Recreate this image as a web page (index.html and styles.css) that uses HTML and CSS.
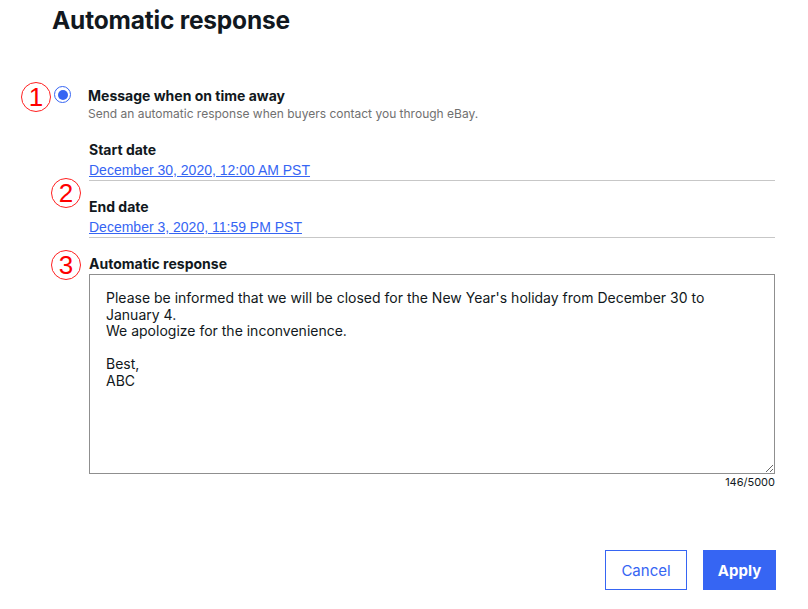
FILE: index.html
```html
<!DOCTYPE html>
<html lang="en">
<head>
    <meta charset="UTF-8">
    <title>Automatic response</title>
    <link rel="stylesheet" href="styles.css">
</head>
<body>
    <div class="page">
        <h1 class="title">Automatic response</h1>

        <div class="row row-away">
            <span class="mark">1</span>
            <span class="radio"><span class="radio-dot"></span></span>
            <div class="away">
                <div class="label">Message when on time away</div>
                <div class="hint">Send an automatic response when buyers contact you through eBay.</div>
            </div>
        </div>

        <div class="row row-dates">
            <span class="mark">2</span>
            <div class="dates">
                <div class="field">
                    <div class="label">Start date</div>
                    <a href="#" class="date-link">December 30, 2020, 12:00 AM PST</a>
                </div>
                <div class="field">
                    <div class="label">End date</div>
                    <a href="#" class="date-link">December 3, 2020, 11:59 PM PST</a>
                </div>
            </div>
        </div>

        <div class="row row-response">
            <span class="mark">3</span>
            <div class="response">
                <div class="label">Automatic response</div>
                <textarea class="message" maxlength="5000">Please be informed that we will be closed for the New Year's holiday from December 30 to January 4.
We apologize for the inconvenience.

Best,
ABC</textarea>
                <div class="counter">146/5000</div>
            </div>
        </div>

        <div class="actions">
            <button class="btn btn-cancel">Cancel</button>
            <button class="btn btn-apply">Apply</button>
        </div>
    </div>
</body>
</html>
```

FILE: styles.css
```css
body {
    margin: 0;
    font-family: Inter, "Noto Sans", sans-serif;
    color: #111820;
    background-color: #fff;
}

.page {
    width: 808px;
    height: 609px;
}

.title {
    margin: 0;
    padding: 5px 0 0 52px;
    font-size: 24.5px;
    font-weight: 700;
    line-height: 30px;
    letter-spacing: -0.2px;
}

.row {
    display: flex;
    align-items: flex-start;
}

.mark {
    width: 28px;
    height: 28px;
    border: 1px solid #ff2020;
    border-radius: 50%;
    color: #ff0000;
    font-family: "Liberation Sans", sans-serif;
    font-size: 26px;
    line-height: 29px;
    text-align: center;
    flex: none;
}

.row-away {
    margin-top: 47px;
    padding-left: 21px;
}

.radio {
    width: 15px;
    height: 15px;
    margin: 4px 0 0 3px;
    border: 1.5px solid #3665f3;
    border-radius: 50%;
    display: flex;
    align-items: center;
    justify-content: center;
    flex: none;
}

.radio-dot {
    width: 10px;
    height: 10px;
    border-radius: 50%;
    background-color: #3665f3;
}

.away {
    margin: 5px 0 0 17px;
}

.label {
    font-size: 14px;
    font-weight: 700;
    line-height: 18px;
}

.hint {
    margin-top: 1px;
    font-size: 12px;
    color: #707070;
    line-height: 16px;
}

.row-dates {
    margin-top: 19px;
    padding-left: 51px;
}

.row-dates .mark {
    margin-top: 37px;
}

.dates {
    margin-left: 8px;
    width: 686px;
}

.field {
    border-bottom: 1px solid #c7c7c7;
    padding-bottom: 1px;
    margin-bottom: 17px;
}

.field .label {
    margin-bottom: 3px;
}

.date-link {
    display: block;
    font-family: "Liberation Sans", Arial, sans-serif;
    font-size: 14px;
    line-height: 17px;
    color: #3665f3;
    text-decoration: underline;
}

.row-response {
    padding-left: 51px;
}

.row-response .mark {
    margin-top: -5px;
}

.response {
    margin-left: 8px;
    width: 686px;
}

.message {
    display: block;
    width: 686px;
    height: 200px;
    margin-top: 1px;
    padding: 15px 40px 14px 16px;
    box-sizing: border-box;
    border: 1px solid #8f8f8f;
    font-family: Inter, "Noto Sans", sans-serif;
    font-size: 14px;
    line-height: 16.5px;
    color: #111820;
    resize: both;
}

.counter {
    text-align: right;
    font-size: 11px;
    line-height: 16px;
}

.actions {
    display: flex;
    justify-content: flex-end;
    gap: 16px;
    padding-right: 32px;
    margin-top: 60px;
}

.btn {
    height: 40px;
    font-family: Inter, "Noto Sans", sans-serif;
    font-size: 15px;
    cursor: pointer;
}

.btn-cancel {
    width: 82px;
    background-color: #fff;
    border: 1px solid #3665f3;
    color: #3665f3;
}

.btn-apply {
    width: 73px;
    background-color: #3665f3;
    border: none;
    color: #fff;
    font-weight: 700;
}
```
